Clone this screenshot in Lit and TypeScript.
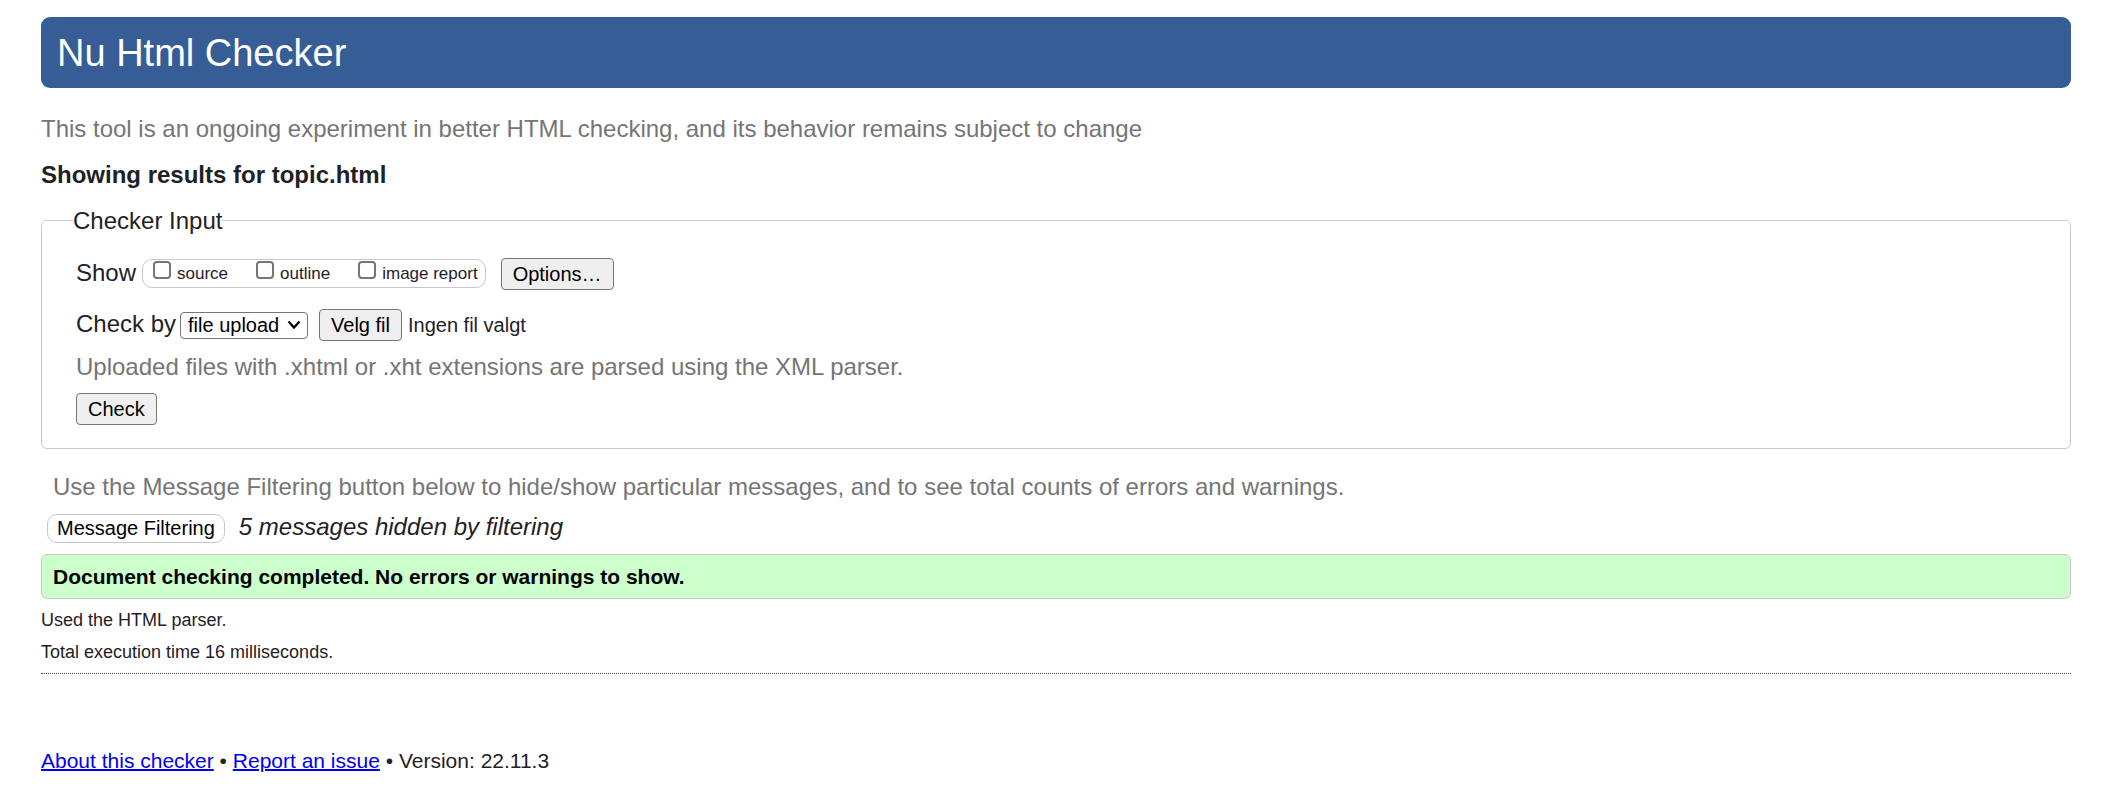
import { LitElement, html, css } from "lit";
import { customElement, query, state } from "lit/decorators.js";

@customElement("app-root")
export class AppRoot extends LitElement {
  @query(".file-input") private fileInput!: HTMLInputElement;
  @state() private fileName = "";

  static styles = css`
    :host {
      display: block;
      box-sizing: border-box;
      padding: 17px 35px 24px 41px;
      background: #fff;
      color: #1f2126;
      font: 24px/28px "Liberation Sans", Arial, sans-serif;
    }
    h1, h2, p, fieldset, legend {
      margin: 0;
      padding: 0;
    }
    .banner {
      padding: 14px 16px 13px;
      border-radius: 9px;
      background: #365d95;
      color: #fff;
      font-size: 38px;
      line-height: 44px;
      font-weight: 400;
    }
    .muted {
      color: #757575;
    }
    .intro {
      margin-top: 27px;
    }
    .heading {
      margin: 18px 0;
      font-size: 24px;
      line-height: 28px;
      font-weight: 700;
    }
    .panel {
      min-width: 0;
      padding: 0 31px 23px;
      border: 1px solid #c8c8c8;
      border-radius: 6px;
    }
    legend {
      line-height: 27px;
    }
    .fields {
      display: flex;
      flex-direction: column;
      align-items: flex-start;
      gap: 12px;
      padding: 24px 3px 0;
    }
    .row {
      display: flex;
      flex-wrap: wrap;
      align-items: baseline;
    }
    .show {
      margin-bottom: 7px;
    }
    button,
    select {
      box-sizing: border-box;
      margin: 0;
      color: #000;
      font: 20px/24px "Liberation Sans", Arial, sans-serif;
    }
    .button {
      height: 32px;
      padding: 3px 11px;
      border: 1px solid #767676;
      border-radius: 4px;
      background: #efefef;
    }
    .options {
      display: flex;
      align-self: flex-start;
      gap: 28px;
      box-sizing: border-box;
      height: 29px;
      margin: 1px 15px 0 6px;
      padding: 0 7px 0 10px;
      border: 1px solid #c8c8c8;
      border-radius: 10px;
    }
    .option {
      display: flex;
      align-items: flex-start;
      gap: 6px;
      font-size: 17px;
      line-height: 28px;
    }
    .check {
      appearance: none;
      box-sizing: border-box;
      width: 18px;
      height: 18px;
      margin: 1px 0 0;
      border: 2px solid #767676;
      border-radius: 4px;
      background: #fff;
    }
    .check:checked {
      background: #0075ff;
      border-color: #0075ff;
    }
    .picker {
      display: inline-grid;
      align-items: baseline;
      margin: 0 11px 0 4px;
    }
    .picker select {
      grid-area: 1 / 1;
      height: 27px;
      padding: 0 27px 0 7px;
      appearance: none;
      border: 1px solid #767676;
      border-radius: 4px;
      background: #fff;
    }
    .chevron {
      grid-area: 1 / 1;
      place-self: center end;
      margin-right: 7px;
      pointer-events: none;
    }
    .file-input {
      display: none;
    }
    .file-name {
      margin-left: 6px;
      font-size: 20px;
    }
    .hint {
      margin: 24px 12px 12px;
    }
    .filter {
      height: 29px;
      margin: 0 14px 0 6px;
      padding: 0 9px;
      border: 1px solid #c8c8c8;
      border-radius: 10px;
      background: #fff;
    }
    .success {
      margin: 11px 0 10px;
      padding: 10px 11px 9px;
      border: 1px solid #c8c8c8;
      border-radius: 6px;
      background: #cfc;
      color: #000;
      font-size: 21px;
      line-height: 24px;
      font-weight: 700;
    }
    .detail {
      font-size: 18px;
      line-height: 22px;
    }
    .detail + .detail {
      margin-top: 10px;
    }
    hr {
      margin: 10px 0 75px;
      border: 0;
      border-top: 1px dotted #444;
    }
    footer {
      font-size: 21px;
      line-height: 24px;
    }
    a {
      color: #00e;
      text-decoration-thickness: 2px;
    }
  `;

  private pickFile() {
    this.fileInput.click();
  }

  private fileChanged() {
    this.fileName = this.fileInput.files?.[0]?.name ?? "";
  }

  private option(id: string, text: string) {
    return html`<label class="option" for=${id}
      ><input class="check" type="checkbox" id=${id} /><span>${text}</span></label
    >`;
  }

  render() {
    return html`
      <h1 class="banner">Nu Html Checker</h1>
      <p class="intro muted">
        This tool is an ongoing experiment in better HTML checking, and its behavior remains subject to change
      </p>
      <h2 class="heading">Showing results for topic.html</h2>
      <fieldset class="panel">
        <legend>Checker Input</legend>
        <div class="fields">
          <div class="row show">
            <span>Show</span>
            <div class="options">
              ${this.option("source", "source")} ${this.option("outline", "outline")}
              ${this.option("images", "image report")}
            </div>
            <button class="button" type="button">Options…</button>
          </div>
          <div class="row">
            <label for="method">Check by</label>
            <span class="picker">
              <select id="method">
                <option>file upload</option>
                <option>address</option>
                <option>text input</option>
              </select>
              <svg class="chevron" width="14" height="10" viewBox="0 0 14 10" aria-hidden="true">
                <path d="M1.5 1.5 7 7.5l5.5-6" fill="none" stroke="#000" stroke-width="2.2" />
              </svg>
            </span>
            <input class="file-input" type="file" aria-label="Velg fil" @change=${this.fileChanged} />
            <button class="button" type="button" @click=${this.pickFile}>Velg fil</button>
            <span class="file-name">${this.fileName || "Ingen fil valgt"}</span>
          </div>
          <p class="muted">Uploaded files with .xhtml or .xht extensions are parsed using the XML parser.</p>
          <button class="button" type="submit">Check</button>
        </div>
      </fieldset>
      <p class="hint muted">
        Use the Message Filtering button below to hide/show particular messages, and to see total counts of errors and
        warnings.
      </p>
      <div class="row">
        <button class="filter" type="button">Message Filtering</button>
        <em>5 messages hidden by filtering</em>
      </div>
      <p class="success">Document checking completed. No errors or warnings to show.</p>
      <p class="detail">Used the HTML parser.</p>
      <p class="detail">Total execution time 16 milliseconds.</p>
      <hr />
      <footer><a href="#about">About this checker</a> • <a href="#issue">Report an issue</a> • Version: 22.11.3</footer>
    `;
  }
}
